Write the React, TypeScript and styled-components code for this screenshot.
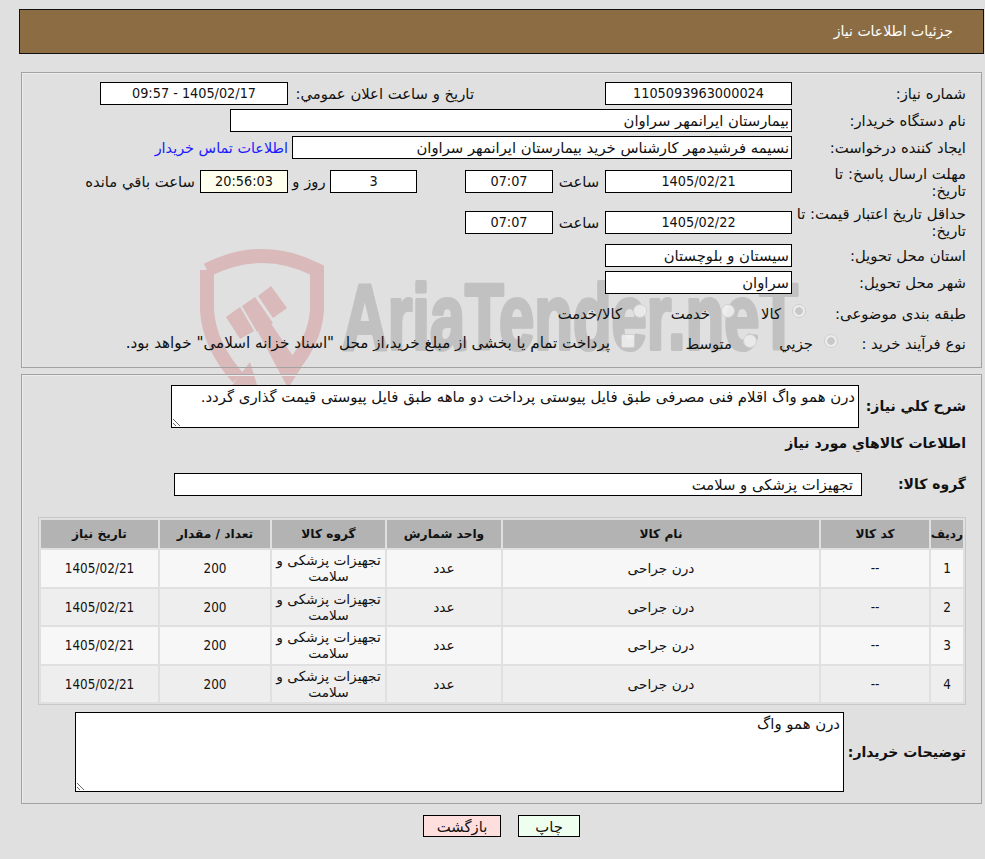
import React from "react";
import styled, {createGlobalStyle} from "styled-components";

const GlobalStyle = createGlobalStyle`
  html, body {
    margin: 0;
    padding: 0;
    background: #e0e0e0;
    overflow: hidden;
  }
  body {
    font-family: "DejaVu Sans", "Liberation Sans", sans-serif;
    font-size: 14.8px;
    color: #111;
  }
`

const numberFont = `"DejaVu Sans Condensed", "Liberation Sans", sans-serif`

const rows = [1, 2, 3, 4]
const columns = ['ردیف', 'کد کالا', 'نام کالا', 'واحد شمارش', 'گروه کالا', 'تعداد / مقدار', 'تاریخ نیاز']
const columnWidths = [32, 108, 316, 114, 113, 110, 117]

const Watermark = () => (
    <WatermarkSvg viewBox="0 0 985 859" aria-hidden="true">
        <g fill="none" stroke="#d9b9ba" strokeWidth="14">
            <path d="M207 270 Q262 242 317 270 L317 310 Q315 342 288 372"/>
            <path d="M207 270 L207 310 Q209 345 238 378"/>
        </g>
        <g fill="#d9b9ba">
            <polygon points="226,317 240,307 254,331 240,339"/>
            <polygon points="242,306 255,297 273,323 257,332"/>
            <polygon points="258,296 271,286 287,308 273,318"/>
            <polygon points="258,332 270,322 301,368 288,388"/>
            <polygon points="250,362 258,388 230,388"/>
        </g>
        <WatermarkText x="342" y="349" textLength="456" lengthAdjust="spacingAndGlyphs">AriaTender.neT</WatermarkText>
    </WatermarkSvg>
)

const App = () => {
    return (
        <Page dir="rtl">
            <GlobalStyle/>
            <Watermark/>
            <Header>جزئیات اطلاعات نیاز</Header>

            <TopPanel>
                <Row>
                    <Label $w={174}>شماره نیاز:</Label>
                    <Field $w={187} $center $num>1105093963000024</Field>
                    <Label $w={182} $ml={4} $mr={131}>تاریخ و ساعت اعلان عمومي:</Label>
                    <Field $w={188} $center $num>1405/02/17 - 09:57</Field>
                </Row>
                <Row>
                    <Label $w={174}>نام دستگاه خریدار:</Label>
                    <Field $w={562}>بیمارستان ایرانمهر سراوان</Field>
                </Row>
                <Row>
                    <Label $w={174}>ایجاد کننده درخواست:</Label>
                    <Field $w={500}>نسیمه فرشیدمهر کارشناس خرید بیمارستان ایرانمهر سراوان</Field>
                    <ContactLink href="#">اطلاعات تماس خریدار</ContactLink>
                </Row>
                <Row $h={37}>
                    <Label $w={174}>مهلت ارسال پاسخ: تا<br/>تاریخ:</Label>
                    <Field $w={187} $center $num>1405/02/21</Field>
                    <Unit $w={52}>ساعت</Unit>
                    <Field $w={88} $center $num>07:07</Field>
                    <Unit $w={48}/>
                    <Field $w={87} $center $num>3</Field>
                    <Unit $w={42}>روز و</Unit>
                    <Field $w={88} $center $num $bg="#ffffee">20:56:03</Field>
                    <Label $w={120} $mr={5}>ساعت باقي مانده</Label>
                </Row>
                <Row $h={36}>
                    <Label $w={174}>حداقل تاریخ اعتبار قیمت: تا<br/>تاریخ:</Label>
                    <Field $w={187} $center $num>1405/02/22</Field>
                    <Unit $w={52}>ساعت</Unit>
                    <Field $w={88} $center $num>07:07</Field>
                </Row>
                <Row>
                    <Label $w={174}>استان محل تحویل:</Label>
                    <Field $w={187}>سیستان و بلوچستان</Field>
                </Row>
                <Row>
                    <Label $w={174}>شهر محل تحویل:</Label>
                    <Field $w={187}>سراوان</Field>
                </Row>
                <Row $h={30}>
                    <Label $w={160}>طبقه بندی موضوعی:</Label>
                    <Option $w={71}><Radio $checked/>کالا</Option>
                    <Option $w={88}><Radio/>خدمت</Option>
                    <Option $w={100}><Radio/>کالا/خدمت</Option>
                </Row>
                <Row $h={22}>
                    <Label $w={128}>نوع فرآیند خرید :</Label>
                    <Option $w={81}><Radio $checked/>جزیي</Option>
                    <Option $w={122}><Radio/>متوسط</Option>
                    <TermsOption><CheckBox/>پرداخت تمام یا بخشی از مبلغ خرید،از محل "اسناد خزانه اسلامی" خواهد بود.</TermsOption>
                </Row>
            </TopPanel>

            <BottomPanel>
                <Row $h={43}>
                    <BoldLabel $w={107}>شرح كلي نياز:</BoldLabel>
                    <NoteArea $w={688} $h={43} readOnly value="درن همو واگ اقلام فنی مصرفی طبق فایل پیوستی پرداخت دو ماهه طبق فایل پیوستی قیمت گذاری گردد."/>
                </Row>
                <SectionTitle>اطلاعات کالاهاي مورد نياز</SectionTitle>
                <GroupRow>
                    <BoldLabel $w={104}>گروه کالا:</BoldLabel>
                    <Field $w={688} $pad={8}>تجهیزات پزشکی و سلامت</Field>
                </GroupRow>
                <ItemsTable>
                    <colgroup>
                        {columnWidths.map((w, i) => <col key={i} width={w}/>)}
                    </colgroup>
                    <thead>
                    <tr>
                        {columns.map(c => <HeadCell key={c}>{c}</HeadCell>)}
                    </tr>
                    </thead>
                    <tbody>
                    {rows.map(n => (
                        <ItemRow key={n} $odd={n % 2 === 1}>
                            <Cell $num>{n}</Cell>
                            <Cell $num>--</Cell>
                            <Cell>درن جراحی</Cell>
                            <Cell>عدد</Cell>
                            <Cell>تجهیزات پزشکی و سلامت</Cell>
                            <Cell $num>200</Cell>
                            <Cell $num>1405/02/21</Cell>
                        </ItemRow>
                    ))}
                    </tbody>
                </ItemsTable>
                <BuyerRow>
                    <BoldLabel $w={122}>توضیحات خریدار:</BoldLabel>
                    <NoteArea $w={769} $h={80} readOnly value="درن همو واگ"/>
                </BuyerRow>
            </BottomPanel>

            <Actions>
                <ActionButton $bg="#efffef" $w={62}>چاپ</ActionButton>
                <ActionButton $bg="#ffdede" $w={78}>بازگشت</ActionButton>
            </Actions>
        </Page>
    )
}

const Page = styled.div`
  position: relative;
  width: 985px;
  height: 859px;
  box-sizing: border-box;
  padding: 9px 1px 0 0;
  overflow: hidden;
`

const WatermarkSvg = styled.svg`
  position: absolute;
  top: 0;
  left: 0;
  width: 985px;
  height: 859px;
  direction: ltr;
`

const WatermarkText = styled.text`
  direction: ltr;
  unicode-bidi: isolate;
  font-family: "Liberation Sans", sans-serif;
  font-weight: 700;
  font-size: 92px;
  fill: #c1c1c1;
  stroke: #c1c1c1;
  stroke-width: 4px;
  stroke-linejoin: round;
`

const Header = styled.div`
  position: relative;
  box-sizing: border-box;
  width: 965px;
  height: 45px;
  margin-bottom: 18px;
  padding-right: 30px;
  border: 1px solid #111;
  background: #8c6c42;
  color: #fff;
  line-height: 43px;
  font-size: 14px;
`

const PanelBase = styled.section`
  position: relative;
  box-sizing: border-box;
  width: 961px;
  margin-right: 2px;
  border: 1px solid #a2a2a2;
  box-shadow: inset 1px 1px 0 #ececec;
  padding: 9px 15px 0 16px;
`

const TopPanel = styled(PanelBase)`
  height: 296px;
  margin-bottom: 6px;
  display: flex;
  flex-direction: column;
  gap: 4px;
`

const BottomPanel = styled(PanelBase)`
  height: 430px;
  padding-top: 10px;
`

const Row = styled.div<{$h?: number}>`
  display: flex;
  align-items: center;
  height: ${p => p.$h ?? 23}px;
`

const Label = styled.div<{$w?: number, $mr?: number, $ml?: number}>`
  flex: 0 0 ${p => p.$w}px;
  margin-right: ${p => p.$mr ?? 0}px;
  margin-left: ${p => p.$ml ?? 0}px;
  white-space: nowrap;
  line-height: 17px;
`

const BoldLabel = styled(Label)`
  font-weight: 700;
  font-size: 14px;
`

const Field = styled.div<{$w: number, $center?: boolean, $num?: boolean, $bg?: string, $pad?: number}>`
  flex: 0 0 ${p => p.$w}px;
  box-sizing: border-box;
  height: 23px;
  padding: 0 ${p => p.$pad ?? 2}px;
  border: 1px solid #000;
  background: ${p => p.$bg ?? '#fff'};
  font-family: ${p => p.$num ? numberFont : 'inherit'};
  font-size: ${p => p.$num ? 14.3 : 14.8}px;
  line-height: 21px;
  text-align: ${p => p.$center ? 'center' : 'right'};
  white-space: nowrap;
  overflow: hidden;
`

const Unit = styled.div<{$w: number}>`
  flex: 0 0 ${p => p.$w}px;
  text-align: center;
  white-space: nowrap;
`

const ContactLink = styled.a`
  margin-right: 4px;
  color: #1a1aff;
  font-size: 14.4px;
  text-decoration: none;
  white-space: nowrap;
`

const Option = styled.div<{$w?: number}>`
  display: flex;
  align-items: center;
  gap: 11px;
  flex: ${p => p.$w ? `0 0 ${p.$w}px` : '0 0 auto'};
  white-space: nowrap;
`

const TermsOption = styled(Option)`
  font-size: 15.2px;
`

const Radio = styled.span<{$checked?: boolean}>`
  flex: 0 0 14px;
  box-sizing: border-box;
  width: 14px;
  height: 14px;
  margin-bottom: 4px;
  border-radius: 50%;
  border: 1px solid #d0d0d0;
  background: ${p => p.$checked
    ? 'radial-gradient(circle, #c8c8c8 0 3.5px, #ececec 4px)'
    : 'rgba(240, 240, 240, 0.85)'};
`

const CheckBox = styled.span`
  flex: 0 0 14px;
  box-sizing: border-box;
  width: 14px;
  height: 14px;
  margin-bottom: 4px;
  border-radius: 2px;
  border: 1px solid #d0d0d0;
  background: rgba(240, 240, 240, 0.85);
`

const NoteArea = styled.textarea<{$w: number, $h: number}>`
  flex: 0 0 ${p => p.$w}px;
  box-sizing: border-box;
  width: ${p => p.$w}px;
  height: ${p => p.$h}px;
  margin: 0;
  padding: 3px 3px;
  border: 1px solid #000;
  border-radius: 0;
  outline: none;
  background: #fff;
  color: #111;
  font-family: inherit;
  font-size: 14.9px;
  line-height: 17px;
`

const SectionTitle = styled.div`
  height: 20px;
  margin-top: 5px;
  font-weight: 700;
  font-size: 14px;
  line-height: 20px;
`

const GroupRow = styled(Row)`
  margin-top: 20px;
`

const ItemsTable = styled.table`
  box-sizing: border-box;
  width: 928px;
  height: 188px;
  margin-top: 21px;
  table-layout: fixed;
  border: 1px solid #c8c8c8;
  border-collapse: separate;
  border-spacing: 2px;
`

const HeadCell = styled.th`
  height: 28px;
  padding: 0;
  background: #b3b3b3;
  font-size: 12.2px;
  font-weight: 700;
`

const ItemRow = styled.tr<{$odd: boolean}>`
  background: ${p => p.$odd ? '#f7f7f7' : '#eeeeee'};
`

const Cell = styled.td<{$num?: boolean}>`
  box-sizing: border-box;
  height: 36px;
  padding: ${p => p.$num ? '2px 2px 0' : '0 2px'};
  text-align: center;
  font-family: ${p => p.$num ? numberFont : 'inherit'};
  font-size: ${p => p.$num ? 13.4 : 13.7}px;
  line-height: 16px;
`

const BuyerRow = styled(Row)`
  height: 80px;
  margin-top: 7px;
`

const Actions = styled.div`
  position: relative;
  display: flex;
  justify-content: center;
  gap: 17px;
  width: 965px;
  margin-top: 11px;
`

const ActionButton = styled.button<{$bg: string, $w: number}>`
  box-sizing: border-box;
  width: ${p => p.$w}px;
  height: 22px;
  padding: 0;
  border: 1px solid #000;
  border-radius: 0;
  background: ${p => p.$bg};
  color: #111;
  font-family: inherit;
  font-size: 14.8px;
`

export default App
